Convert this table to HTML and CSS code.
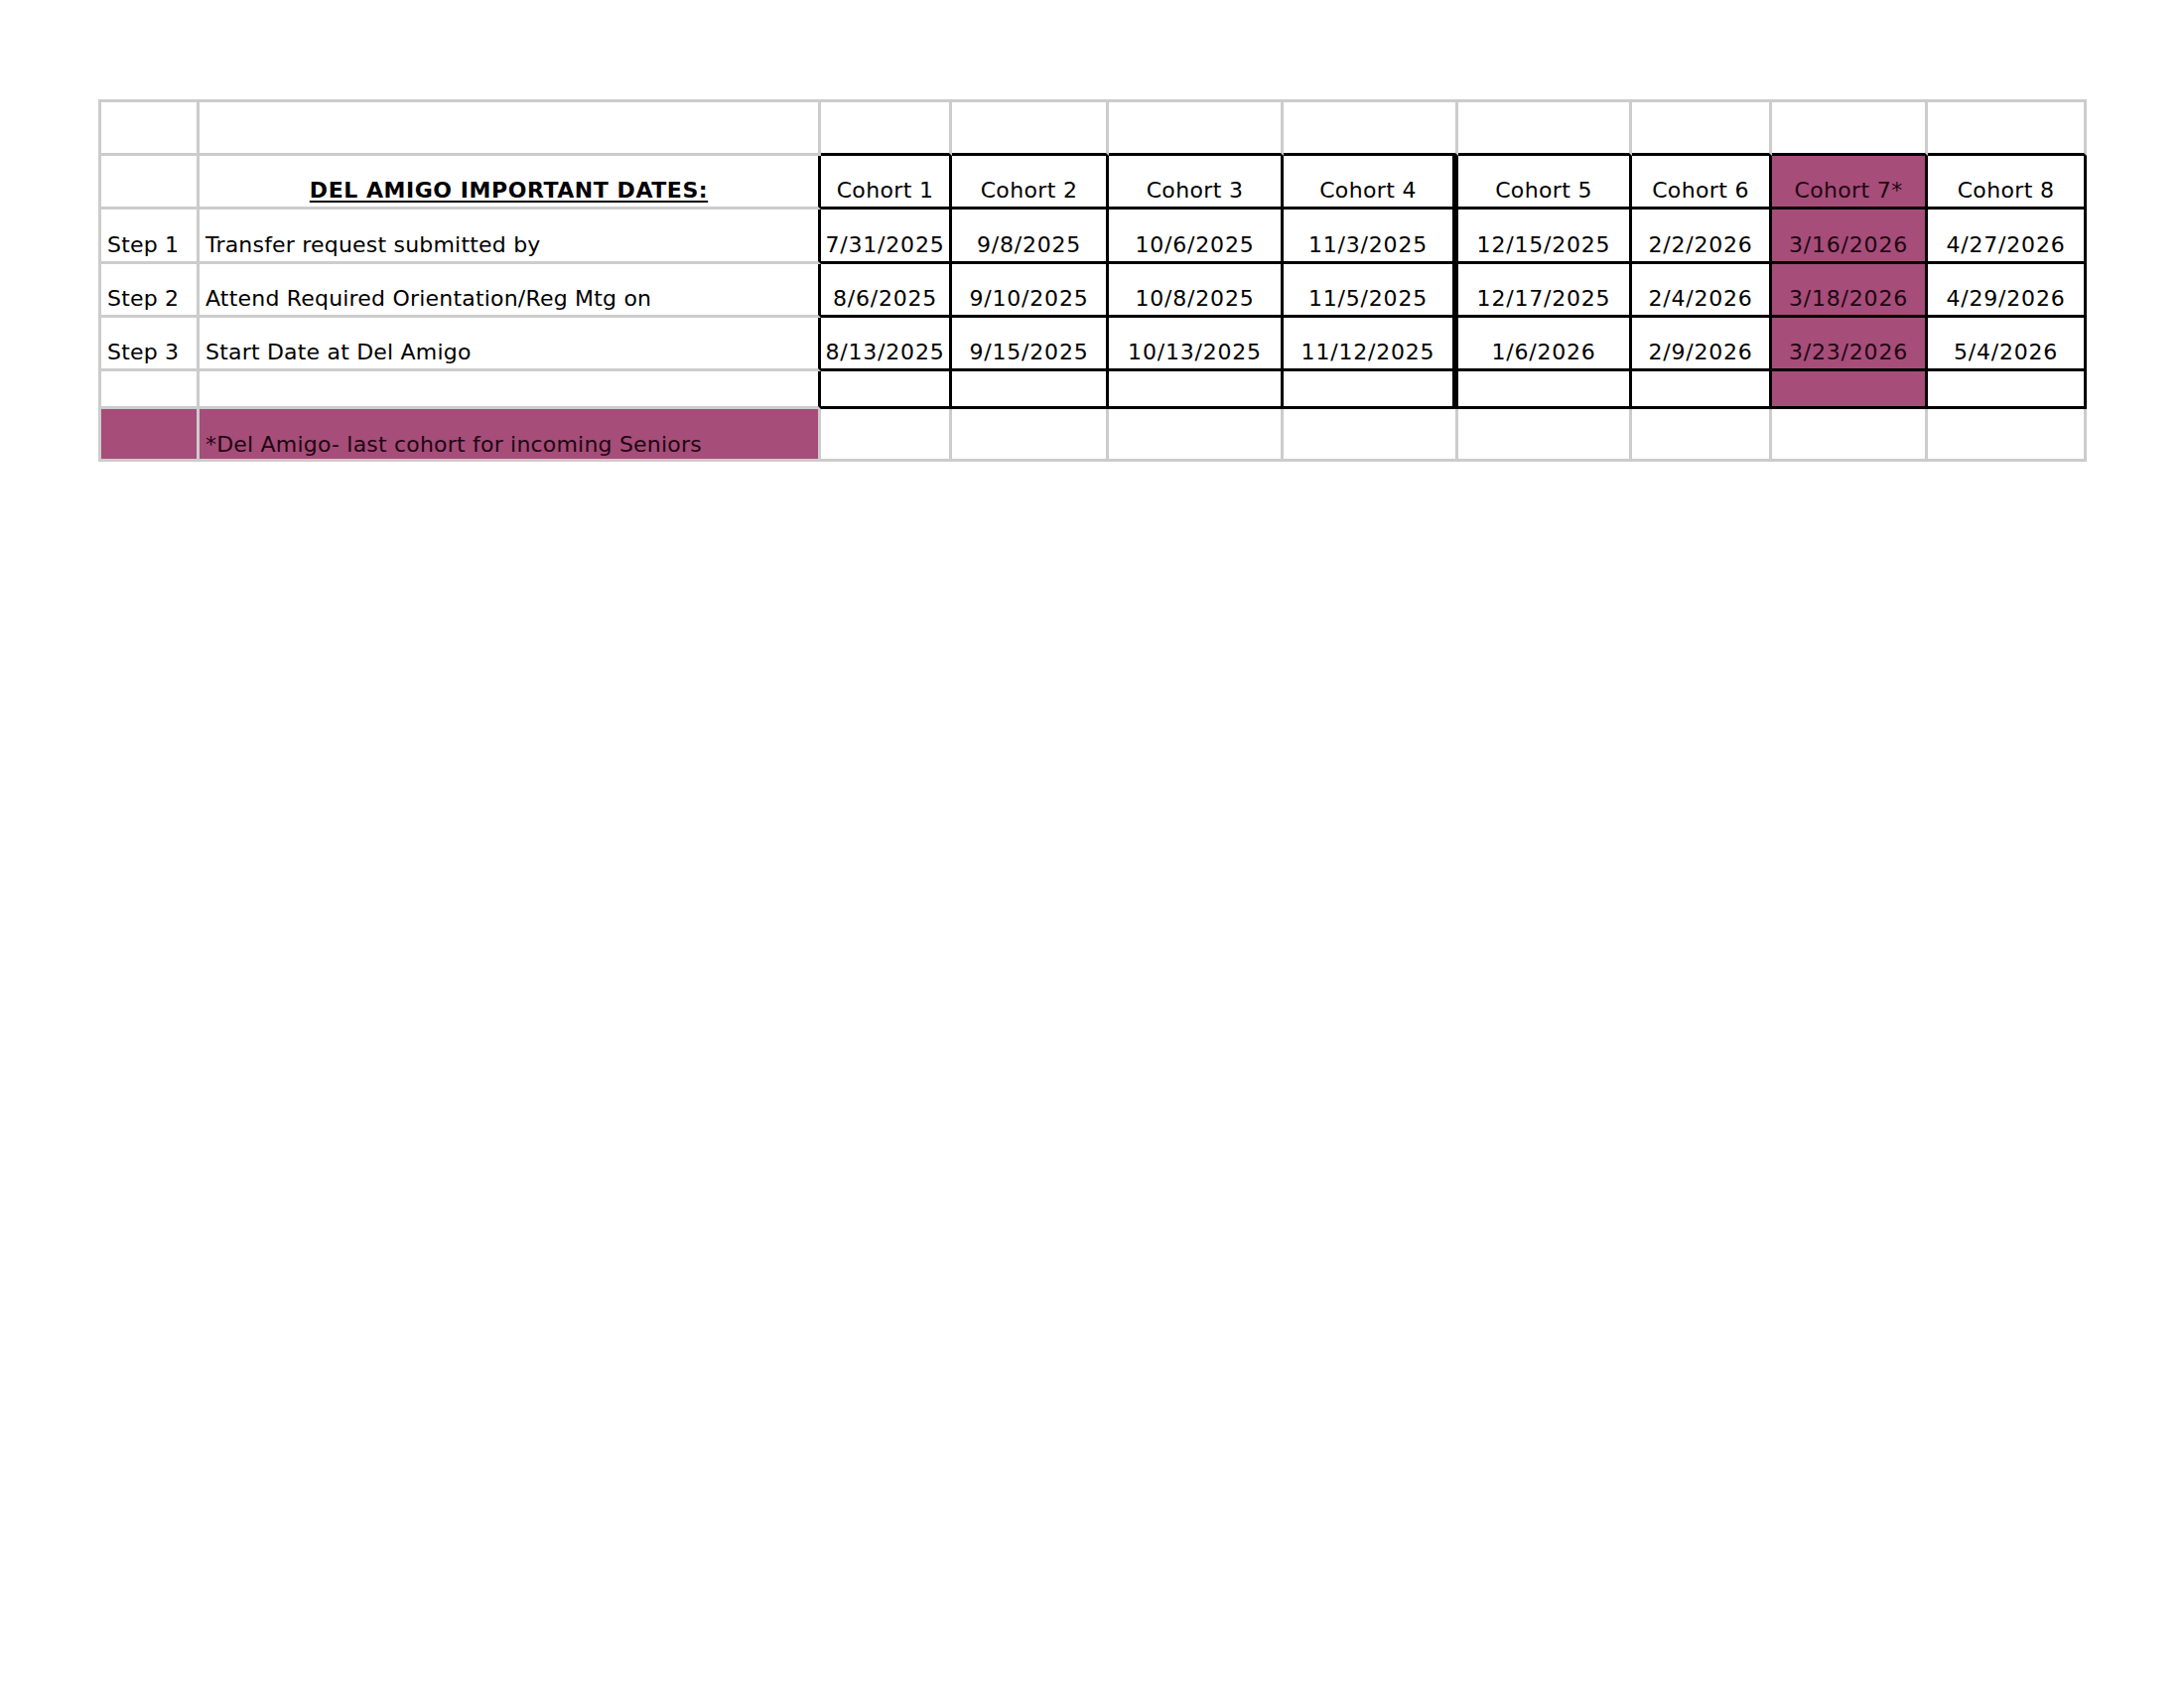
FILE: index.html
```html
<!DOCTYPE html>
<html lang="en">
<head>
<meta charset="utf-8">
<title>Del Amigo Important Dates</title>
<link rel="stylesheet" href="styles.css">
</head>
<body>
<div class="sheet">
  <!-- row 1 -->
  <div class="c"></div>
  <div class="c"></div>
  <div class="c top"></div>
  <div class="c top"></div>
  <div class="c top"></div>
  <div class="c top"></div>
  <div class="c top"></div>
  <div class="c top"></div>
  <div class="c top"></div>
  <div class="c top"></div>

  <!-- row 2 -->
  <div class="c"></div>
  <div class="c edge ctr"><span class="title">DEL AMIGO IMPORTANT DATES:</span></div>
  <div class="c box ctr head">Cohort 1</div>
  <div class="c box ctr head">Cohort 2</div>
  <div class="c box ctr head">Cohort 3</div>
  <div class="c box thick ctr head">Cohort 4</div>
  <div class="c box ctr head">Cohort 5</div>
  <div class="c box ctr head">Cohort 6</div>
  <div class="c box plum ctr head">Cohort 7*</div>
  <div class="c box ctr head">Cohort 8</div>

  <!-- row 3 -->
  <div class="c">Step 1</div>
  <div class="c edge">Transfer request submitted by</div>
  <div class="c box ctr date">7/31/2025</div>
  <div class="c box ctr date">9/8/2025</div>
  <div class="c box ctr date">10/6/2025</div>
  <div class="c box thick ctr date">11/3/2025</div>
  <div class="c box ctr date">12/15/2025</div>
  <div class="c box ctr date">2/2/2026</div>
  <div class="c box plum ctr date">3/16/2026</div>
  <div class="c box ctr date">4/27/2026</div>

  <!-- row 4 -->
  <div class="c">Step 2</div>
  <div class="c edge">Attend Required Orientation/Reg Mtg on</div>
  <div class="c box ctr date">8/6/2025</div>
  <div class="c box ctr date">9/10/2025</div>
  <div class="c box ctr date">10/8/2025</div>
  <div class="c box thick ctr date">11/5/2025</div>
  <div class="c box ctr date">12/17/2025</div>
  <div class="c box ctr date">2/4/2026</div>
  <div class="c box plum ctr date">3/18/2026</div>
  <div class="c box ctr date">4/29/2026</div>

  <!-- row 5 -->
  <div class="c">Step 3</div>
  <div class="c edge">Start Date at Del Amigo</div>
  <div class="c box ctr date">8/13/2025</div>
  <div class="c box ctr date">9/15/2025</div>
  <div class="c box ctr date">10/13/2025</div>
  <div class="c box thick ctr date">11/12/2025</div>
  <div class="c box ctr date">1/6/2026</div>
  <div class="c box ctr date">2/9/2026</div>
  <div class="c box plum ctr date">3/23/2026</div>
  <div class="c box ctr date">5/4/2026</div>

  <!-- row 6 -->
  <div class="c"></div>
  <div class="c edge"></div>
  <div class="c box"></div>
  <div class="c box"></div>
  <div class="c box"></div>
  <div class="c box thick"></div>
  <div class="c box"></div>
  <div class="c box"></div>
  <div class="c box plum"></div>
  <div class="c box"></div>

  <!-- row 7 -->
  <div class="c plum last"></div>
  <div class="c plum last">*Del Amigo- last cohort for incoming Seniors</div>
  <div class="c last"></div>
  <div class="c last"></div>
  <div class="c last"></div>
  <div class="c last"></div>
  <div class="c last"></div>
  <div class="c last"></div>
  <div class="c last"></div>
  <div class="c last"></div>
</div>
</body>
</html>
```

FILE: styles.css
```css
html, body {
  margin: 0;
  padding: 0;
  background: #ffffff;
}

body {
  width: 2200px;
  height: 1700px;
  font-family: "DejaVu Sans", Verdana, sans-serif;
  color: #000000;
}

.sheet {
  display: grid;
  grid-template-columns: 99px 626px 132px 158px 176px 176px 175px 141px 157px 160px;
  grid-template-rows: 54px 54px 55px 54px 54px 38px 53px;
  width: max-content;
  margin: 100px 0 0 99px;
  border-left: 3px solid #cccccc;
  border-top: 3px solid #cccccc;
}

.c {
  box-sizing: border-box;
  display: flex;
  align-items: flex-end;
  padding: 0 6px 3px 6px;
  border-right: 3px solid #cccccc;
  border-bottom: 3px solid #cccccc;
  font-size: 22px;
  line-height: 26px;
  letter-spacing: 0.2px;
  white-space: nowrap;
  overflow: visible;
}

.ctr {
  justify-content: center;
  padding-left: 0;
  padding-right: 0;
}

.head {
  letter-spacing: 0.35px;
}

.date {
  letter-spacing: 0.8px;
}

.top {
  border-bottom-color: #000000;
}

.edge {
  border-right-color: #000000;
}

.box {
  border-right-color: #000000;
  border-bottom-color: #000000;
}

.thick {
  border-right-width: 6px;
}

.plum {
  background: #a64d79;
  color: #1e0612;
}

.last {
  padding-bottom: 1px;
}

.title {
  font-weight: bold;
  letter-spacing: 0.55px;
  text-decoration: underline;
  text-underline-offset: 3px;
  text-decoration-thickness: 2px;
}
```
